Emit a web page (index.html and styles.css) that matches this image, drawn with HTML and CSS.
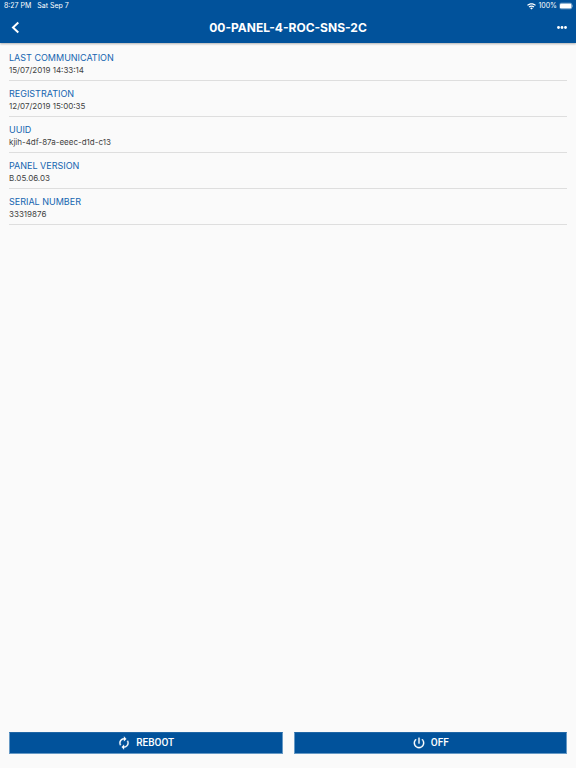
FILE: index.html
```html
<!DOCTYPE html>
<html lang="en">
<head>
	<meta charset="utf-8">
	<meta name="viewport" content="width=device-width, initial-scale=1">
	<title>00-PANEL-4-ROC-SNS-2C</title>
	<link rel="stylesheet" href="styles.css">
</head>
<body>
	<header class="header">
		<div class="status">
			<span>8:27 PM</span>
			<span>Sat Sep 7</span>
			<span class="status-right">
				<svg width="9" height="7" viewBox="0 0 18 13" fill="#fff">
					<path d="M9 0C5.600 0 2.500 1.300 0.200 3.500L1.900 5.200C3.700 3.500 6.200 2.400 9 2.400s5.300 1.100 7.100 2.800l1.700-1.700C15.500 1.300 12.400 0 9 0z"/>
					<path d="M9 4.400c-2.200 0-4.200.9-5.700 2.300L5 8.400c1-1 2.500-1.600 4-1.600s3 .6 4 1.600l1.700-1.700C13.200 5.300 11.200 4.400 9 4.400z"/>
					<path d="M9 8.700c-1 0-2 .4-2.700 1.100L9 12.600l2.700-2.800C11 9.100 10 8.700 9 8.700z"/>
				</svg>
				<span>100%</span>
				<svg width="14" height="8" viewBox="0 0 14 8">
					<rect x="0.500" y="1" width="12.500" height="6" rx="1.800" fill="none" stroke="#fff" stroke-opacity=".45" stroke-width=".6"/>
					<rect x="1" y="1.500" width="11.500" height="5" rx="1.200" fill="#fff"/>
					<path d="M13.400 3v2c.4-.2.600-.5.600-1s-.2-.8-.6-1z" fill="#fff" fill-opacity=".6"/>
				</svg>
			</span>
		</div>
		<div class="bar">
			<button class="icon-button" type="button" aria-label="Back">
				<svg width="14" height="14" viewBox="0 0 14 14" fill="none" stroke="#fff" stroke-width="2">
					<path d="M9.300 1.500L4 6.500l5.300 5"/>
				</svg>
			</button>
			<h1 class="title">00-PANEL-4-ROC-SNS-2C</h1>
			<button class="icon-button" type="button" aria-label="More">
				<svg width="14" height="14" viewBox="0 0 14 14" fill="#fff">
					<circle cx="5.500" cy="6.500" r="1.400"/>
					<circle cx="9" cy="6.500" r="1.400"/>
					<circle cx="12.500" cy="6.500" r="1.400"/>
				</svg>
			</button>
		</div>
	</header>

	<main class="content">
		<dl class="details">
			<div class="row">
				<dt>LAST COMMUNICATION</dt>
				<dd>15/07/2019 14:33:14</dd>
			</div>
			<div class="row">
				<dt>REGISTRATION</dt>
				<dd>12/07/2019 15:00:35</dd>
			</div>
			<div class="row">
				<dt>UUID</dt>
				<dd>kjih-4df-87a-eeec-d1d-c13</dd>
			</div>
			<div class="row">
				<dt>PANEL VERSION</dt>
				<dd>B.05.06.03</dd>
			</div>
			<div class="row">
				<dt>SERIAL NUMBER</dt>
				<dd>33319876</dd>
			</div>
		</dl>
	</main>

	<footer class="actions">
		<button class="action" type="button">
			<svg width="14" height="14" viewBox="0 0 24 24" fill="#fff" stroke="#fff" stroke-width=".5">
				<path d="M12 6v3l4-4-4-4v3c-4.420 0-8 3.580-8 8 0 1.570.46 3.030 1.240 4.260L6.700 14.800c-.45-.83-.7-1.790-.7-2.800 0-3.310 2.690-6 6-6zm6.760 1.740L17.300 9.200c.44.840.7 1.790.7 2.800 0 3.310-2.690 6-6 6v-3l-4 4 4 4v-3c4.420 0 8-3.580 8-8 0-1.570-.46-3.030-1.240-4.260z"/>
			</svg>
			<span>REBOOT</span>
		</button>
		<button class="action" type="button">
			<svg width="14" height="14" viewBox="0 0 24 24" fill="#fff" stroke="#fff" stroke-width=".5">
				<path d="M13 3h-2v10h2V3zm4.830 2.170l-1.420 1.420C17.990 7.860 19 9.810 19 12c0 3.870-3.130 7-7 7s-7-3.130-7-7c0-2.190 1.010-4.140 2.580-5.420L6.170 5.170C4.230 6.820 3 9.260 3 12c0 4.970 4.030 9 9 9s9-4.030 9-9c0-2.740-1.230-5.180-3.170-6.830z"/>
			</svg>
			<span>OFF</span>
		</button>
	</footer>
</body>
</html>
```

FILE: styles.css
```css
* {
	box-sizing: border-box;
}
body {
	margin: 0;
	min-height: 100vh;
	display: flex;
	flex-direction: column;
	background: #fafafa;
	color: #424242;
	font-family: Inter, "Liberation Sans", sans-serif;
}
svg {
	display: block;
	flex: none;
}
.header {
	background: #01529b;
	color: #fff;
	box-shadow: 0 1px 2px rgba(0, 0, 0, 0.3);
}
.status {
	display: flex;
	align-items: center;
	gap: 6px;
	height: 12px;
	padding: 0 3px 0 4px;
	font-size: 7px;
	line-height: 12px;
}
.status-right {
	display: flex;
	align-items: center;
	gap: 2px;
	margin-left: auto;
}
.bar {
	display: flex;
	align-items: center;
	height: 31px;
	padding: 0 8px;
}
.icon-button {
	padding: 1px;
	border: 0;
	background: none;
}
.title {
	flex: 1;
	margin: 0;
	font-size: 12px;
	font-weight: 700;
	line-height: 16px;
	text-align: center;
}
.content {
	flex: 1;
	padding: 2px 9px 0;
}
.details {
	margin: 0;
}
.row {
	padding: 7px 0 4px;
	border-bottom: 1px solid #dedede;
}
.row dt {
	color: #1565b0;
	font-size: 9px;
	line-height: 12px;
}
.row dd {
	margin: 0;
	font-size: 8px;
	line-height: 12px;
}
.actions {
	display: grid;
	grid-template-columns: 1fr 1fr;
	gap: 11px;
	padding: 0 9px 14px;
}
.action {
	display: flex;
	align-items: center;
	justify-content: center;
	gap: 5px;
	height: 22px;
	padding: 0;
	border: 1px solid #6699c5;
	border-top-color: #1f66a6;
	background: #01529b;
	color: #fff;
	font-family: Roboto, "Liberation Sans", sans-serif;
	font-size: 10px;
	font-weight: 500;
	line-height: 12px;
}
```
